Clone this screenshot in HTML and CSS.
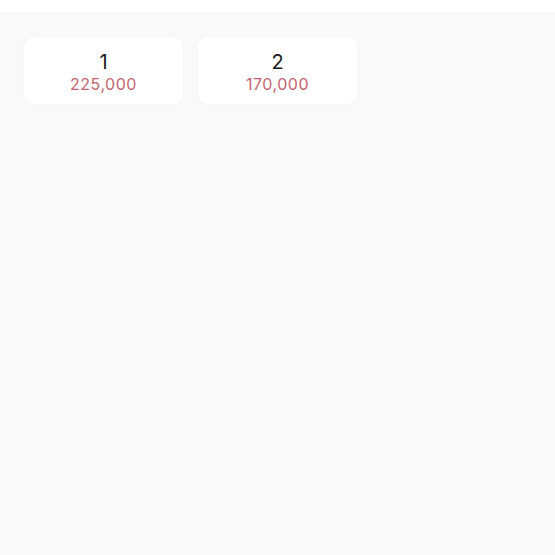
FILE: index.html
```html
<!DOCTYPE html>
<html>
<head>
<meta charset="utf-8">
<link rel="stylesheet" href="styles.css">
</head>
<body>
<div class="topbar"></div>
<main class="content">
  <div class="cards">
    <div class="card">
      <div class="num">1</div>
      <div class="price">225,000</div>
    </div>
    <div class="card">
      <div class="num">2</div>
      <div class="price">170,000</div>
    </div>
  </div>
</main>
</body>
</html>
```
FILE: styles.css
```css
html, body {
  margin: 0;
  padding: 0;
  height: 100%;
}
body {
  background: #f9f9f9;
  font-family: "Inter", "Noto Sans", sans-serif;
}
.topbar {
  height: 12px;
  background: #ffffff;
}
.content {
  padding: 25px 24px;
}
.cards {
  display: flex;
  gap: 15px;
}
.card {
  width: 159px;
  height: 67px;
  box-sizing: border-box;
  background: #ffffff;
  border-radius: 9px;
  box-shadow: 0 0 2px rgba(0,0,0,0.06);
  display: flex;
  flex-direction: column;
  align-items: center;
  justify-content: center;
  padding-top: 2px;
}
.num {
  font-size: 20px;
  line-height: 24px;
  color: #1a1a1a;
}
.price {
  font-size: 16px;
  line-height: 20px;
  color: #c46470;
  letter-spacing: 0.5px;
}
```
